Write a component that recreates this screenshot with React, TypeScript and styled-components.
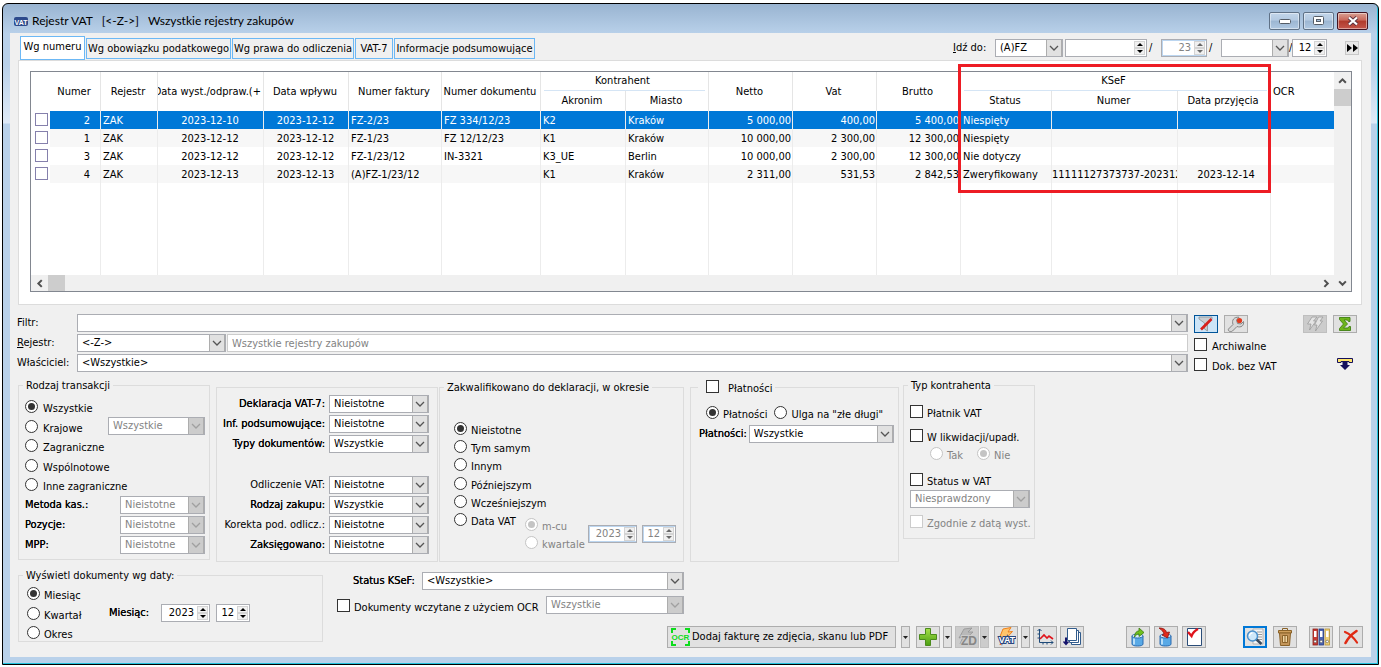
import React, { useState } from 'react';
import styled, { createGlobalStyle, css } from 'styled-components';

const Global = createGlobalStyle`
  *, *::before, *::after { box-sizing: border-box; }
  body {
    margin: 0;
    background: #fff;
    color: #000;
    font: 11px/14px "DejaVu Sans Condensed", "DejaVu Sans", sans-serif;
  }
  button, input, select { font: inherit; color: inherit; margin: 0; }
`;

/* ---------- window frame ---------- */

const Page = styled.div`
  padding: 3px 2px 2px;
`;

const Win = styled.main`
  border: 1px solid #000;
  border-radius: 6px 6px 0 0;
  padding: 0 7px 7px 7px;
  box-shadow: inset -1px -1px 0 #22c3dd;
  background: linear-gradient(#99b4d1 0, #b9d1ea 30px, #b9d1ea 60px, #dfeaf7 119px, #b9d1ea 120px);
`;

const TitleBar = styled.header`
  display: flex;
  align-items: center;
  height: 29px;
  padding: 5px 3px 0 4px;
  gap: 3px;
`;

const Title = styled.h1`
  flex: 1;
  margin: 0;
  padding-left: 1px;
  font: 12px/16px Lato, "Open Sans", sans-serif;
  white-space: pre;
`;

const CaptionButton = styled.button<{ $close?: boolean }>`
  display: flex;
  align-items: center;
  justify-content: center;
  width: 31px;
  height: 18px;
  padding: 0;
  border: 1px solid ${p => (p.$close ? '#431422' : '#5f7186')};
  border-radius: 2px;
  box-shadow: inset 0 0 0 1px rgba(255, 255, 255, 0.45);
  background: ${p =>
    p.$close
      ? 'linear-gradient(#d8a093 0, #c9675a 45%, #b03a2c 50%, #c4554a 100%)'
      : 'linear-gradient(#c2d5ea 0, #b3c9e1 45%, #9cb6d2 50%, #b0c8e2 100%)'};
`;

const Client = styled.div`
  background: #f0f0f0;
  padding: 3px 0 9px;
`;

/* ---------- form controls ---------- */

const Label = styled.label<{ $strong?: boolean; $dim?: boolean }>`
  white-space: nowrap;
  color: ${p => (p.$dim ? '#838383' : '#000')};
  ${p => p.$strong && css`text-shadow: 0 0 0 #000;`}
`;

const box = css`
  display: flex;
  min-width: 0;
  height: 18px;
  border: 1px solid #abadb3;
  background: #fff;
`;

const SelectFrame = styled.span<{ $w?: number; $dim?: boolean }>`
  ${box}
  ${p => (p.$w ? `flex: 0 0 ${p.$w}px;` : 'flex: 1;')}
  color: ${p => (p.$dim ? '#838383' : '#000')};
`;

const NativeSelect = styled.select`
  flex: 1;
  min-width: 0;
  appearance: none;
  border: 0;
  outline: 0;
  padding: 0 0 0 4px;
  background: transparent;
  opacity: 1;
  &:disabled { color: #838383; }
`;

const ArrowBox = styled.span<{ $dim?: boolean }>`
  display: flex;
  align-items: center;
  justify-content: center;
  flex: 0 0 16px;
  border: 1px solid #adadad;
  border-width: 0 1px 0 1px;
  background: ${p => (p.$dim ? '#ccc' : '#e1e1e1')};
  color: ${p => (p.$dim ? '#a0a0a0' : '#555')};
  pointer-events: none;
`;

const SpinFrame = styled.span<{ $w: number; $dim?: boolean }>`
  ${box}
  flex: 0 0 ${p => p.$w}px;
  color: ${p => (p.$dim ? '#838383' : '#000')};
  ${p => p.$dim && css`box-shadow: inset 1px 1px 0 #bcd6f0, inset 0 -1px 0 #bcd6f0;`}
`;

const SpinInput = styled.input`
  flex: 1;
  width: 0;
  min-width: 0;
  border: 0;
  outline: 0;
  padding: 0 3px 0 0;
  background: transparent;
  text-align: right;
`;

const SpinButtons = styled.span`
  display: flex;
  flex-direction: column;
  flex: 0 0 12px;
  padding: 1px 1px 1px 0;
`;

const SpinButton = styled.button`
  display: flex;
  flex: 1;
  align-items: center;
  justify-content: center;
  min-height: 0;
  padding: 0;
  border: 1px solid #d4d4d4;
  background: #f0f0f0;
`;

const TextField = styled.input`
  flex: 1;
  min-width: 0;
  height: 18px;
  border: 1px solid #ccc;
  padding: 0 4px;
  background: #fff;
  color: #838383;
`;

const Tick = styled.input.attrs({ type: 'checkbox' })`
  appearance: none;
  flex: 0 0 13px;
  width: 13px;
  height: 13px;
  border: 1px solid #333;
  background: #fff;
  &:disabled { border-color: #ccc; }
  &:checked { background: linear-gradient(#333, #333) center / 7px 7px no-repeat #fff; }
`;

const Dot = styled.input.attrs({ type: 'radio' })`
  appearance: none;
  display: flex;
  align-items: center;
  justify-content: center;
  flex: 0 0 13px;
  width: 13px;
  height: 13px;
  border: 1px solid #333;
  border-radius: 50%;
  background: #fff;
  color: #333;
  &:disabled { border-color: #c4c4c4; color: #c4c4c4; }
  &:checked::before {
    content: "";
    width: 7px;
    height: 7px;
    border-radius: 50%;
    background: currentColor;
  }
`;

const Choice = styled.label<{ $dim?: boolean }>`
  display: flex;
  align-items: flex-start;
  gap: 5px;
  height: 13px;
  line-height: 17px;
  white-space: nowrap;
  color: ${p => (p.$dim ? '#838383' : '#000')};
`;

function Select(p: { id?: string; label?: string; value: string; w?: number; disabled?: boolean }) {
  return (
    <SelectFrame $w={p.w} $dim={p.disabled}>
      <NativeSelect id={p.id} aria-label={p.label} disabled={p.disabled}>
        <option>{p.value}</option>
      </NativeSelect>
      <ArrowBox $dim={p.disabled}>
        <svg width="10" height="6" viewBox="0 0 10 6" fill="none" stroke="currentColor" strokeWidth="1.3">
          <path d="M1 1l4 4 4-4" />
        </svg>
      </ArrowBox>
    </SelectFrame>
  );
}

function Spin(p: { id?: string; label: string; value: string; w: number; disabled?: boolean }) {
  const [value, setValue] = useState(p.value);
  const ink = p.disabled ? '#6a6a6a' : '#000';
  return (
    <SpinFrame $w={p.w} $dim={p.disabled}>
      <SpinInput
        id={p.id}
        aria-label={p.label}
        value={value}
        disabled={p.disabled}
        onChange={e => setValue(e.target.value)}
      />
      <SpinButtons>
        <SpinButton aria-label={`${p.label} +`} disabled={p.disabled}>
          <svg width="6" height="3" viewBox="0 0 6 3"><path d="M0 3L3 0l3 3z" fill={ink} /></svg>
        </SpinButton>
        <SpinButton aria-label={`${p.label} -`} disabled={p.disabled}>
          <svg width="6" height="3" viewBox="0 0 6 3"><path d="M0 0l3 3 3-3z" fill={ink} /></svg>
        </SpinButton>
      </SpinButtons>
    </SpinFrame>
  );
}

function Radio(p: { name: string; text: string; checked?: boolean; disabled?: boolean }) {
  return (
    <Choice $dim={p.disabled}>
      <Dot name={p.name} defaultChecked={p.checked} disabled={p.disabled} />
      {p.text}
    </Choice>
  );
}

function Check(p: { text: string; disabled?: boolean }) {
  return (
    <Choice $dim={p.disabled}>
      <Tick disabled={p.disabled} />
      {p.text}
    </Choice>
  );
}

/* ---------- tabs and go-to bar ---------- */

const TopRow = styled.div`
  display: flex;
  justify-content: space-between;
  padding: 0 12px 0 10px;
  height: 24px;
`;

const Tabs = styled.nav`
  display: flex;
  align-items: flex-start;
  gap: 1px;
`;

const Tab = styled.button<{ $active?: boolean; $w: number }>`
  flex: 0 0 ${p => p.$w}px;
  height: ${p => (p.$active ? 24 : 21)}px;
  margin-top: ${p => (p.$active ? 0 : 2)}px;
  padding: ${p => (p.$active ? '0 0 3px' : '0')};
  border: 1px solid #6cb8f5;
  background: ${p => (p.$active ? '#fff' : '#f0f0f0')};
  white-space: nowrap;
`;

const GoTo = styled.div`
  display: flex;
  align-items: center;
  height: 24px;
  gap: 2px;
`;

const GoToLabel = styled(Label)`
  flex: 0 0 40px;
`;

const GoToPair = styled.div`
  display: flex;
  align-items: center;
  width: 106px;
`;

const Slash = styled.span<{ $w: number }>`
  flex: 0 0 ${p => p.$w}px;
`;

const FastButton = styled.button`
  display: flex;
  align-items: center;
  justify-content: center;
  width: 14px;
  height: 14px;
  margin-left: 16px;
  padding: 0;
  border: 1px solid #c8c8c8;
  background: #e8e8e8;
`;

/* ---------- data table ---------- */

const Panel = styled.section`
  margin: 0 9px 0 8px;
  padding: 10px 9px 12px 11px;
  border: 1px solid #dcdcdc;
  background: #fff;
`;

const Grid = styled.div`
  position: relative;
  display: grid;
  grid-template-columns: 1fr 17px;
  grid-template-rows: 203px 16px;
  border: 1px solid #828790;
`;

const Table = styled.table`
  width: 100%;
  table-layout: fixed;
  border-collapse: separate;
  border-spacing: 0;
  line-height: 16px;
`;

const Th = styled.th<{ $bare?: boolean; $sub?: boolean }>`
  height: ${p => (p.$sub ? 20 : 19)}px;
  padding: 0 2px 0 0;
  font-weight: normal;
  white-space: nowrap;
  overflow: hidden;
  ${p => !p.$bare && css`border-right: 1px solid #e5e5e5;`}
`;

const HeadClip = styled.div`
  display: flex;
  justify-content: flex-end;
  overflow: hidden;
`;

const Band = styled.div`
  height: 19px;
  margin: 0 1px 0 3px;
  padding-right: 4px;
  border-bottom: 1px solid #d5e5f5;
  line-height: 18px;
`;

const LeadTh = styled(Th)`
  padding-left: 2px;
  text-align: left;
`;

const Row = styled.tr<{ $selected?: boolean; $stripe?: boolean }>`
  td {
    color: ${p => (p.$selected ? '#fff' : '#000')};
    background: ${p => (p.$selected ? '#0078d7' : p.$stripe ? '#f7f7f7' : '#fff')};
  }
  td:first-child { background: #fff; }
`;

const Td = styled.td<{ $align?: string; $bare?: boolean; $inset?: number; $lead?: number }>`
  height: 18px;
  padding: 2px ${p => p.$inset ?? 1}px 0 ${p => p.$lead ?? (p.$align ? 0 : 2)}px;
  overflow: hidden;
  white-space: nowrap;
  text-align: ${p => p.$align ?? 'left'};
  ${p => !p.$bare && css`border-right: 1px solid #ececec;`}
`;

const TickCell = styled.td`
  height: 18px;
  padding: 2px 0 3px 4px;
  vertical-align: top;
`;

const Filler = styled(Td)`
  height: 91px;
`;

const RowTick = styled(Tick)`
  display: block;
  border-color: #8580ac;
`;

const VScroll = styled.div`
  grid-row: 1 / 3;
  grid-column: 2;
  display: flex;
  flex-direction: column;
  align-items: center;
  background: #f0f0f0;
`;

const HScroll = styled.div`
  display: flex;
  align-items: center;
  background: #f0f0f0;
`;

const Thumb = styled.span`
  flex: 0 0 17px;
  align-self: stretch;
  background: #cdcdcd;
`;

const Track = styled.span`
  flex: 1;
`;

const ScrollButton = styled.button`
  display: flex;
  align-items: center;
  justify-content: center;
  flex: 0 0 17px;
  width: 17px;
  height: 17px;
  padding: 0;
  border: 0;
  background: transparent;
  color: #505050;
`;

const Highlight = styled.div`
  position: absolute;
  left: 927px;
  top: -8px;
  width: 313px;
  height: 129px;
  border: 3px solid #ed1c24;
  pointer-events: none;
`;

const chevrons = {
  up: 'M1 6l3-3 3 3',
  down: 'M1 3l3 3 3-3',
  left: 'M6 1L3 4l3 3',
  right: 'M3 1l3 3-3 3',
};

function Scroll({ dir, label }: { dir: keyof typeof chevrons; label: string }) {
  return (
    <ScrollButton aria-label={label}>
      <svg width="9" height="9" viewBox="0 0 8 8" fill="none" stroke="currentColor" strokeWidth="1.8">
        <path d={chevrons[dir]} />
      </svg>
    </ScrollButton>
  );
}

const widths = [19, 51, 57, 106, 85, 93, 99, 85, 83, 84, 84, 84, 91, 126, 93];
const rows = [
  ['2', 'ZAK', '2023-12-10', '2023-12-12', 'FZ-2/23', 'FZ 334/12/23', 'K2', 'Kraków', '5 000,00', '400,00', '5 400,00', 'Niespięty', '', '', ''],
  ['1', 'ZAK', '2023-12-12', '2023-12-12', 'FZ-1/23', 'FZ 12/12/23', 'K1', 'Kraków', '10 000,00', '2 300,00', '12 300,00', 'Niespięty', '', '', ''],
  ['3', 'ZAK', '2023-12-12', '2023-12-12', 'FZ-1/23/12', 'IN-3321', 'K3_UE', 'Berlin', '10 000,00', '2 300,00', '12 300,00', 'Nie dotyczy', '', '', ''],
  ['4', 'ZAK', '2023-12-13', '2023-12-13', '(A)FZ-1/23/12', '', 'K1', 'Kraków', '2 311,00', '531,53', '2 842,53', 'Zweryfikowany', '11111127373737-202312', '2023-12-14', ''],
];
const aligns: Record<number, string> = { 0: 'right', 2: 'center', 3: 'center', 8: 'right', 9: 'right', 10: 'right', 13: 'center' };
const insets: Record<number, number> = { 0: 10, 12: 0 };
const leads: Record<number, number> = { 12: 0, 13: 5 };

function Register() {
  return (
    <Grid>
      <Table>
        <colgroup>
          {widths.map((w, i) => <col key={i} style={{ width: w }} />)}
          <col />
        </colgroup>
        <thead>
          <tr>
            <Th rowSpan={2} $bare />
            <Th rowSpan={2}>Numer</Th>
            <Th rowSpan={2}>Rejestr</Th>
            <Th rowSpan={2}><HeadClip>Data wyst./odpraw.(+</HeadClip></Th>
            <Th rowSpan={2}>Data wpływu</Th>
            <Th rowSpan={2}>Numer faktury</Th>
            <Th rowSpan={2}>Numer dokumentu</Th>
            <Th colSpan={2}><Band>Kontrahent</Band></Th>
            <Th rowSpan={2}>Netto</Th>
            <Th rowSpan={2}>Vat</Th>
            <Th rowSpan={2}>Brutto</Th>
            <Th colSpan={3}><Band>KSeF</Band></Th>
            <LeadTh rowSpan={2} $bare>OCR</LeadTh>
          </tr>
          <tr>
            <Th $sub>Akronim</Th>
            <Th $sub>Miasto</Th>
            <Th $sub>Status</Th>
            <Th $sub>Numer</Th>
            <Th $sub>Data przyjęcia</Th>
          </tr>
        </thead>
        <tbody>
          {rows.map((r, i) => (
            <Row key={r[0]} $selected={i === 0} $stripe={i % 2 === 1}>
              <TickCell><RowTick aria-label={`Zaznacz ${r[0]}`} /></TickCell>
              {r.map((c, j) => (
                <Td key={j} $align={aligns[j]} $inset={insets[j]} $lead={leads[j]} $bare={j === 14}>{c}</Td>
              ))}
            </Row>
          ))}
          <tr>
            {[...widths, 0].map((_, i) => <Filler key={i} $bare={i === 0 || i === 15} />)}
          </tr>
        </tbody>
      </Table>
      <VScroll>
        <Scroll dir="up" label="W górę" />
        <Thumb />
        <Track />
        <Scroll dir="down" label="W dół" />
      </VScroll>
      <HScroll>
        <Scroll dir="left" label="W lewo" />
        <Thumb />
        <Track />
        <Scroll dir="right" label="W prawo" />
      </HScroll>
      <Highlight />
    </Grid>
  );
}

/* ---------- filter strip ---------- */

const Filters = styled.section`
  display: grid;
  grid-template-columns: minmax(0, 1fr) 163px;
  column-gap: 6px;
  padding: 9px 14px 0 7px;
`;

const FilterRow = styled.div`
  display: flex;
  gap: 1px;
  height: 20px;
`;

const FilterLabel = styled(Label)`
  flex: 0 0 59px;
  line-height: 17px;
`;

const SideRow = styled.div`
  display: flex;
  align-items: center;
  height: 20px;
  gap: 6px;
`;

const Spacer = styled.span`
  flex: 1;
`;

const IconButton = styled.button<{ $tone?: 'on' | 'off' | 'focus'; $h?: number }>`
  display: flex;
  align-items: center;
  justify-content: center;
  flex: 0 0 24px;
  height: ${p => p.$h ?? 22}px;
  padding: 0;
  border: ${p => (p.$tone === 'focus' ? '2px solid #0078d7' : p.$tone === 'on' ? '1px solid #005499' : '1px solid #adadad')};
  ${p => p.$tone === 'off' && css`border-color: #bfbfbf;`}
  background: ${p => (p.$tone === 'on' ? '#cce4f7' : p.$tone === 'off' ? '#ccc' : '#e1e1e1')};
`;

const PlainButton = styled.button`
  display: flex;
  padding: 0;
  margin-right: 4px;
  border: 0;
  background: transparent;
`;

/* ---------- groups ---------- */

const Groups = styled.section`
  display: flex;
  align-items: flex-start;
  padding: 4px 8px 0;
`;

const Group = styled.fieldset<{ $w: number; $left?: number; $top?: number; $min?: number }>`
  flex: 0 0 ${p => p.$w}px;
  min-width: 0;
  min-height: ${p => p.$min ?? 0}px;
  margin: ${p => p.$top ?? 0}px 0 0 ${p => p.$left ?? 0}px;
  padding: 0 4px;
  border: 1px solid #dcdcdc;
`;

const Legend = styled.legend`
  height: 14px;
  padding: 0 3px;
  line-height: 16px;
  white-space: nowrap;
`;

const CheckLegend = styled(Legend)`
  margin-left: 3px;
  padding-left: 8px;
  label { gap: 9px; }
`;

const Stack = styled.div<{ $h: number }>`
  display: flex;
  flex-direction: column;
  justify-content: space-between;
  height: ${p => p.$h}px;
`;

const Line = styled.div<{ $gap?: number }>`
  display: flex;
  align-items: center;
  gap: ${p => p.$gap ?? 0}px;
`;

const ShortLine = styled(Line)`
  justify-content: space-between;
  height: 13px;
`;

const FieldLine = styled.div<{ $right?: boolean }>`
  display: flex;
  height: 20px;
  gap: 4px;
  label {
    flex: 1;
    line-height: 17px;
    text-align: ${p => (p.$right ? 'right' : 'left')};
  }
`;

const KindBody = styled.div`
  padding: 8px 0 3px 2px;
`;

const KindFields = styled.div`
  padding-top: 5px;
`;

const DeclBody = styled.div`
  padding: 7px 4px 5px 0;
`;

const DeclGap = styled.div`
  height: 21px;
`;

const PeriodBody = styled.div`
  display: flex;
  align-items: flex-end;
  padding: 28px 0 12px 10px;
`;

const PeriodList = styled(Stack)`
  width: 71px;
  margin-bottom: 23px;
  label { gap: 4px; }
`;

const PeriodSub = styled(Line)`
  height: 31px;
`;

const SubList = styled(Stack)`
  width: 58px;
  label { gap: 4px; }
`;

const PayBody = styled.div`
  display: flex;
  flex-direction: column;
  gap: 6px;
  padding-top: 12px;
`;

const PayRadios = styled(Line)`
  padding-left: 11px;
  label { gap: 4px; }
`;

const PayField = styled(Line)`
  padding-left: 4px;
`;

const PartyBody = styled.div`
  display: grid;
  grid-template-columns: 120px;
  grid-template-rows: 24px 18px 26px 17px 25px 13px;
  padding: 13px 0 10px 2px;
  label { gap: 4px; }
`;

const PartyRadios = styled(Line)`
  height: 13px;
  padding-left: 20px;
`;

/* ---------- bottom area ---------- */

const Bottom = styled.section`
  display: flex;
  align-items: flex-start;
  padding: 6px 8px 0;
`;

const DateBody = styled.div`
  display: flex;
  align-items: center;
  padding: 5px 0 2px 4px;
`;

const DateList = styled(Stack)`
  width: 82px;
  label { gap: 4px; }
`;

const MonthLabel = styled(Label)`
  flex: 0 0 46px;
`;

const BottomMain = styled.div`
  flex: 1;
  min-width: 0;
  padding: 4px 0 0 14px;
`;

const StatusLine = styled(Line)`
  padding-left: 16px;
  label { flex: 0 0 69px; }
`;

const OcrLine = styled(Line)`
  height: 18px;
  margin-top: 6px;
`;

const OcrChoice = styled.div`
  flex: 0 0 209px;
  label { gap: 4px; }
`;

const Toolbar = styled.div`
  display: flex;
  justify-content: flex-end;
  gap: 3px;
  margin-top: 12px;
`;

const ToolGroup = styled.div<{ $left?: number; $gap?: number }>`
  display: flex;
  gap: ${p => p.$gap ?? 3}px;
  margin-left: ${p => p.$left ?? 0}px;
`;

const ScanButton = styled.button`
  display: flex;
  align-items: center;
  flex: 0 0 229px;
  height: 22px;
  gap: 2px;
  padding: 0 0 0 3px;
  border: 1px solid #adadad;
  background: #e1e1e1;
  white-space: nowrap;
`;

const DropButton = styled.button`
  display: flex;
  align-items: center;
  justify-content: center;
  flex: 0 0 9px;
  height: 22px;
  padding: 0;
  border: 1px solid #adadad;
  background: #e1e1e1;
  &:disabled { background: #ccc; border-color: #bfbfbf; }
`;

function Drop({ label, disabled }: { label: string; disabled?: boolean }) {
  return (
    <DropButton aria-label={label} disabled={disabled}>
      <svg width="5" height="3" viewBox="0 0 5 3"><path d="M0 0h5L2.5 3z" fill="#222" /></svg>
    </DropButton>
  );
}

/* ---------- drawings ---------- */

const FilterIcon = () => (
  <svg width="16" height="16" viewBox="0 0 16 16">
    <path d="M1 1h13v2L9.500 7v8l-3-2V7L1 3z" fill="#c9ced2" stroke="#8b9094" strokeWidth=".8" />
    <path d="M13.500 3L3 13.500" stroke="#d8201c" strokeWidth="2.600" />
  </svg>
);
const WrenchIcon = () => (
  <svg width="18" height="16" viewBox="0 0 18 16">
    <path d="M1.500 13L6 8.500C4.500 4 7 .8 12 1.200L9.500 4l1 3.500 3.500.5 2.500-2.500c.8 4-2.500 6.500-6.500 5L5.500 15c-2 1.500-5 0-4-2z" fill="#d8d8d8" stroke="#858585" />
    <circle cx="12.500" cy="4.500" r="2.600" fill="#e03a1e" />
  </svg>
);
const BoltsIcon = () => (
  <svg width="18" height="16" viewBox="0 0 18 16" fill="#e4e4e4" stroke="#9c9c9c" strokeWidth=".8">
    <path d="M6 1h5L7.500 5H10L3.500 14l1.500-6H1.500z" />
    <path d="M12.500 1H17l-3 4h2.500L9.500 15l1.500-6H8.500z" />
  </svg>
);
const SigmaIcon = () => (
  <svg width="14" height="16" viewBox="0 0 14 16">
    <path d="M1.500 1.500h10.500v4h-1.500L9.500 4H6l3.500 4L5.500 12h4.500l1-1.500h1.500v4h-11v-2L5.500 8l-4-4.500z" fill="#6fb51c" stroke="#3f8012" strokeWidth=".9" />
  </svg>
);
const CollapseIcon = () => (
  <svg width="16" height="12" viewBox="0 0 16 12">
    <path d="M.5.5h15v4H12v-1H4v1H.5z" fill="#ffe66b" stroke="#15105c" />
    <path d="M5.500 4h5v3H13l-5 5-5-5h2.500z" fill="#15105c" />
  </svg>
);
const VatLogo = () => (
  <svg width="14" height="11" viewBox="0 0 14 11">
    <rect x="0" y="1" width="14" height="9" rx="2" fill="#2d4a8c" />
    <text x="7" y="8.500" textAnchor="middle" fontSize="7" fontWeight="bold" fontFamily="Liberation Sans, sans-serif" fill="#fff">VAT</text>
  </svg>
);
const OcrIcon = () => (
  <svg width="19" height="18" viewBox="0 0 19 18">
    <path d="M1 5V1h4M14 1h4v4M1 13v4h4M14 17h4v-4" fill="none" stroke="#0ddc1c" strokeWidth="2" />
    <text x="9.500" y="12" textAnchor="middle" fontSize="8" fontWeight="bold" fontFamily="Liberation Sans, sans-serif" fill="#0ddc1c">OCR</text>
  </svg>
);
const PlusIcon = () => (
  <svg width="18" height="18" viewBox="0 0 18 18">
    <defs>
      <linearGradient id="leaf" x1="0" y1="0" x2="0" y2="1">
        <stop offset="0" stopColor="#a5e04a" />
        <stop offset="1" stopColor="#4a9e12" />
      </linearGradient>
    </defs>
    <path d="M6.500.5h5v6h6v5h-6v6h-5v-6h-6v-5h6z" fill="url(#leaf)" stroke="#4b8b1c" />
  </svg>
);
const ZdIcon = () => (
  <svg width="20" height="20" viewBox="0 0 20 20">
    <path d="M7 2l8-1-4 4 5 0L3 17l3-7-4 1z" fill="#b9b9b9" stroke="#949494" strokeWidth=".8" />
    <text x="12" y="18" textAnchor="middle" fontSize="12" fontWeight="bold" fontFamily="Liberation Sans, sans-serif" fill="#868686" stroke="#ccc" strokeWidth="2" paintOrder="stroke">ZD</text>
  </svg>
);
const VatBoltIcon = () => (
  <svg width="20" height="20" viewBox="0 0 20 20">
    <path d="M7 2l8-1.500-3 4.500 4.500-.5L4 18l2.500-7L3 12z" fill="#ffc46b" stroke="#f0801a" />
    <text x="11" y="16" textAnchor="middle" fontSize="9" fontWeight="bold" fontFamily="Liberation Sans, sans-serif" fill="#fff" stroke="#27467f" strokeWidth="2" paintOrder="stroke">VAT</text>
  </svg>
);
const ChartIcon = () => (
  <svg width="18" height="18" viewBox="0 0 18 18" fill="none">
    <path d="M3.500 1v13.500H17M1.500 3l2-2 2 2M15 12.500l2 2-2 2M1.500 6h2M1.500 10h2M7 14.500v2M11 14.500v2" stroke="#1e4a78" />
    <path d="M4 11l4-4 3 3 2-2 4 3" stroke="#e0141c" strokeWidth="1.600" />
  </svg>
);
const PagesIcon = () => (
  <svg width="18" height="18" viewBox="0 0 18 18" stroke="#315b8c" fill="#fff">
    <path d="M8.500 4.500h9v12h-9z" />
    <path d="M6.500 2.500h9v12h-9z" />
    <path d="M4.500.5h9v12h-9z" />
    <path d="M2 9.500h2v4h2.500L3 17.500-.500 13.500H2z" fill="#14136b" stroke="none" />
  </svg>
);
const Cylinder = ({ children }: { children: React.ReactNode }) => (
  <svg width="18" height="20" viewBox="0 0 18 20">
    <path d="M3 9v8c0 1.500 2.500 2 5.500 2s5.500-.5 5.500-2V9z" fill="#58a9e6" stroke="#2a6bb0" />
    <path d="M5 11.500v6" stroke="#b9def8" strokeWidth="2" />
    <ellipse cx="8.500" cy="9" rx="5.500" ry="2" fill="#d8edfb" stroke="#2a6bb0" />
    {children}
  </svg>
);
const CheckPageIcon = () => (
  <svg width="20" height="20" viewBox="0 0 20 20">
    <path d="M3.500 1.500h14v17h-14z" fill="#fff" stroke="#2b4d78" />
    <path d="M4 5l3.500 4C9 5 11 3.500 14 2" fill="none" stroke="#e0141c" strokeWidth="2.400" />
  </svg>
);
const PreviewIcon = () => (
  <svg width="20" height="18" viewBox="0 0 20 18">
    <path d="M8 1h10v15H8z" fill="#f6f6f6" stroke="#b5b5b5" />
    <path d="M12 4h5M13 6.500h4M13 9h4M12 11.500h5" stroke="#999" />
    <path d="M11 11l5.500 5" stroke="#3b4a5c" strokeWidth="2.600" />
    <circle cx="7.500" cy="8" r="5" fill="#cfe8fa" stroke="#4a90cc" strokeWidth="1.500" />
    <path d="M4.500 8a3 3 0 0 1 3-3" stroke="#fff" strokeWidth="1.400" fill="none" />
  </svg>
);
const TrashIcon = () => (
  <svg width="16" height="18" viewBox="0 0 16 18" stroke="#8a6228">
    <path d="M5.500 2.500v-2h5v2" fill="none" />
    <path d="M1.500 2.500h13v2.500h-13z" fill="#d0a05c" />
    <path d="M2.500 5h11l-1 12.500h-9z" fill="#c4965a" />
    <path d="M5.500 7.500h5v7h-5zM8 7.500v7" fill="#f0d6a5" />
  </svg>
);
const BindersIcon = () => (
  <svg width="18" height="18" viewBox="0 0 18 18">
    {[['#c93a32', '#8a201c'], ['#4b65b5', '#273a80'], ['#f0d27a', '#b59138']].map(([fill, line], i) => (
      <g key={fill} transform={`translate(${i * 6} 0)`}>
        <rect x="1" y="1" width="4.500" height="16" fill={fill} stroke={line} strokeWidth=".8" />
        <rect x="2" y="3" width="2.500" height="6" fill="#fff" />
        <circle cx="3.200" cy="13.500" r="1.300" fill="#fff" stroke="#555" strokeWidth=".6" />
      </g>
    ))}
  </svg>
);
const CrossIcon = () => (
  <svg width="16" height="16" viewBox="0 0 16 16" fill="none" stroke="#e02a14" strokeLinecap="round">
    <path d="M2 3c5 2 9 6 12 10.500" strokeWidth="2.200" />
    <path d="M13.500 2C9 5 5 9 2.500 14" strokeWidth="2.600" />
  </svg>
);

/* ---------- screen ---------- */

const declTop: [string, string, boolean][] = [
  ['Deklaracja VAT-7:', 'Nieistotne', true],
  ['Inf. podsumowujące:', 'Nieistotne', true],
  ['Typy dokumentów:', 'Wszystkie', true],
];
const declBottom: [string, string, boolean][] = [
  ['Odliczenie VAT:', 'Nieistotne', false],
  ['Rodzaj zakupu:', 'Wszystkie', true],
  ['Korekta pod. odlicz.:', 'Nieistotne', false],
  ['Zaksięgowano:', 'Nieistotne', true],
];

function DeclField({ row }: { row: [string, string, boolean] }) {
  const [text, value, strong] = row;
  return (
    <FieldLine $right>
      <Label htmlFor={text} $strong={strong}>{text}</Label>
      <Select id={text} value={value} w={100} />
    </FieldLine>
  );
}

export default function App() {
  return (
    <Page>
      <Global />
      <Win>
        <TitleBar>
          <VatLogo />
          <Title>{'Rejestr VAT   [<-Z->]   Wszystkie rejestry zakupów'}</Title>
          <CaptionButton aria-label="Minimalizuj">
            <svg width="12" height="6" viewBox="0 0 12 6"><rect x=".5" y="1.500" width="11" height="4" rx="1" fill="#fff" stroke="#555c66" /></svg>
          </CaptionButton>
          <CaptionButton aria-label="Maksymalizuj">
            <svg width="12" height="10" viewBox="0 0 12 10"><rect x=".5" y=".5" width="10" height="8" rx="1" fill="#fff" stroke="#555c66" /><rect x="3.500" y="3.500" width="4" height="2" fill="#a8c0dc" stroke="#555c66" /></svg>
          </CaptionButton>
          <CaptionButton aria-label="Zamknij" $close>
            <svg width="12" height="10" viewBox="0 0 12 10"><path d="M2 1.500l8 7M10 1.500l-8 7" stroke="#5b3340" strokeWidth="4" /><path d="M2 1.500l8 7M10 1.500l-8 7" stroke="#fff" strokeWidth="2.200" /></svg>
          </CaptionButton>
        </TitleBar>

        <Client>
          <TopRow>
            <Tabs>
              <Tab $active $w={65}>Wg numeru</Tab>
              <Tab $w={145}>Wg obowiązku podatkowego</Tab>
              <Tab $w={122}>Wg prawa do odliczenia</Tab>
              <Tab $w={38}>VAT-7</Tab>
              <Tab $w={141}>Informacje podsumowujące</Tab>
            </Tabs>
            <GoTo>
              <GoToLabel htmlFor="goto"><u>I</u>dź do:</GoToLabel>
              <Select id="goto" value="(A)FZ" w={68} />
              <Spin label="Numer" value="" w={82} />
              <Slash $w={10}>/</Slash>
              <Spin label="Rok" value="23" w={46} disabled />
              <Slash $w={10}>/</Slash>
              <GoToPair>
                <Select label="Seria" value="" w={68} />
                <Slash $w={3}>/</Slash>
                <Spin label="Miesiąc rejestru" value="12" w={35} />
              </GoToPair>
              <FastButton aria-label="Przejdź">
                <svg width="11" height="8" viewBox="0 0 11 8"><path d="M0 0l5 4-5 4zM6 0l5 4-5 4z" /></svg>
              </FastButton>
            </GoTo>
          </TopRow>

          <Panel>
            <Register />
          </Panel>

          <Filters>
            <div>
              <FilterRow>
                <FilterLabel htmlFor="filtr">Filtr:</FilterLabel>
                <Select id="filtr" value="" />
              </FilterRow>
              <FilterRow>
                <FilterLabel htmlFor="rejestr"><u>R</u>ejestr:</FilterLabel>
                <Select id="rejestr" value="<-Z->" w={149} />
                <TextField aria-label="Nazwa rejestru" defaultValue="Wszystkie rejestry zakupów" readOnly />
              </FilterRow>
              <FilterRow>
                <FilterLabel htmlFor="wlasciciel">Właściciel:</FilterLabel>
                <Select id="wlasciciel" value="<Wszystkie>" />
              </FilterRow>
            </div>
            <div>
              <SideRow>
                <IconButton $tone="on" $h={18} aria-label="Filtr"><FilterIcon /></IconButton>
                <IconButton $h={18} aria-label="Konstruktor filtra"><WrenchIcon /></IconButton>
                <Spacer />
                <IconButton $tone="off" $h={18} disabled aria-label="Operacje"><BoltsIcon /></IconButton>
                <IconButton $h={18} aria-label="Suma"><SigmaIcon /></IconButton>
              </SideRow>
              <SideRow><Check text="Archiwalne" /></SideRow>
              <SideRow>
                <Check text="Dok. bez VAT" />
                <Spacer />
                <PlainButton aria-label="Zwiń"><CollapseIcon /></PlainButton>
              </SideRow>
            </div>
          </Filters>

          <Groups>
            <Group $w={192}>
              <Legend>Rodzaj transakcji</Legend>
              <KindBody>
                <Stack $h={91}>
                  <Radio name="kind" text="Wszystkie" checked />
                  <ShortLine>
                    <Radio name="kind" text="Krajowe" />
                    <Select label="Krajowe" value="Wszystkie" w={97} disabled />
                  </ShortLine>
                  <Radio name="kind" text="Zagraniczne" />
                  <Radio name="kind" text="Wspólnotowe" />
                  <Radio name="kind" text="Inne zagraniczne" />
                </Stack>
                <KindFields>
                  {['Metoda kas.:', 'Pozycje:', 'MPP:'].map(t => (
                    <FieldLine key={t}>
                      <Label htmlFor={t} $strong>{t}</Label>
                      <Select id={t} value="Nieistotne" w={85} disabled />
                    </FieldLine>
                  ))}
                </KindFields>
              </KindBody>
            </Group>

            <Group $w={222} $left={6} $top={9}>
              <DeclBody>
                {declTop.map(r => <DeclField key={r[0]} row={r} />)}
                <DeclGap />
                {declBottom.map(r => <DeclField key={r[0]} row={r} />)}
              </DeclBody>
            </Group>

            <Group $w={245} $left={1} $top={2}>
              <Legend>Zakwalifikowano do deklaracji, w okresie</Legend>
              <PeriodBody>
                <PeriodList $h={104}>
                  <Radio name="period" text="Nieistotne" checked />
                  <Radio name="period" text="Tym samym" />
                  <Radio name="period" text="Innym" />
                  <Radio name="period" text="Późniejszym" />
                  <Radio name="period" text="Wcześniejszym" />
                  <Radio name="period" text="Data VAT" />
                </PeriodList>
                <PeriodSub $gap={5}>
                  <SubList $h={31}>
                    <Radio name="unit" text="m-cu" checked disabled />
                    <Radio name="unit" text="kwartale" disabled />
                  </SubList>
                  <Spin label="Rok deklaracji" value="2023" w={49} disabled />
                  <Spin label="Miesiąc deklaracji" value="12" w={34} disabled />
                </PeriodSub>
              </PeriodBody>
            </Group>

            <Group $w={209} $left={6} $top={2} $min={182}>
              <CheckLegend><Check text="Płatności" /></CheckLegend>
              <PayBody>
                <PayRadios $gap={7}>
                  <Radio name="pay" text="Płatności" checked />
                  <Radio name="pay" text={'Ulga na "złe długi"'} />
                </PayRadios>
                <PayField $gap={2}>
                  <Label htmlFor="pay" $strong>Płatności:</Label>
                  <Select id="pay" value="Wszystkie" w={145} />
                </PayField>
              </PayBody>
            </Group>

            <Group $w={132} $left={4}>
              <Legend>Typ kontrahenta</Legend>
              <PartyBody>
                <Check text="Płatnik VAT" />
                <Check text="W likwidacji/upadł." />
                <PartyRadios $gap={14}>
                  <Radio name="liq" text="Tak" disabled />
                  <Radio name="liq" text="Nie" checked disabled />
                </PartyRadios>
                <Check text="Status w VAT" />
                <Select label="Status w VAT" value="Niesprawdzony" disabled />
                <Check text="Zgodnie z datą wyst." disabled />
              </PartyBody>
            </Group>
          </Groups>

          <Bottom>
            <Group $w={305}>
              <Legend>Wyświetl dokumenty wg daty:</Legend>
              <DateBody>
                <DateList $h={52}>
                  <Radio name="date" text="Miesiąc" checked />
                  <Radio name="date" text="Kwartał" />
                  <Radio name="date" text="Okres" />
                </DateList>
                <Line $gap={6}>
                  <MonthLabel htmlFor="rok" $strong>Miesiąc:</MonthLabel>
                  <Spin id="rok" label="Rok dokumentów" value="2023" w={49} />
                  <Spin label="Miesiąc dokumentów" value="12" w={34} />
                </Line>
              </DateBody>
            </Group>

            <BottomMain>
              <StatusLine>
                <Label htmlFor="ksef" $strong>Status KSeF:</Label>
                <Select id="ksef" value="<Wszystkie>" w={262} />
              </StatusLine>
              <OcrLine>
                <OcrChoice><Check text="Dokumenty wczytane z użyciem OCR" /></OcrChoice>
                <Select label="OCR" value="Wszystkie" w={138} disabled />
              </OcrLine>
              <Toolbar>
                <ToolGroup $gap={5}>
                  <ScanButton><OcrIcon />Dodaj fakturę ze zdjęcia, skanu lub PDF</ScanButton>
                  <Drop label="Więcej: OCR" />
                </ToolGroup>
                <ToolGroup $left={3}>
                  <IconButton aria-label="Dodaj"><PlusIcon /></IconButton>
                  <Drop label="Więcej: dodaj" />
                </ToolGroup>
                <ToolGroup $gap={1}>
                  <IconButton $tone="off" disabled aria-label="ZD"><ZdIcon /></IconButton>
                  <Drop label="Więcej: ZD" disabled />
                </ToolGroup>
                <ToolGroup $left={2}>
                  <IconButton aria-label="VAT"><VatBoltIcon /></IconButton>
                  <Drop label="Więcej: VAT" />
                  <IconButton aria-label="Wykres"><ChartIcon /></IconButton>
                  <IconButton aria-label="Dokumenty"><PagesIcon /></IconButton>
                </ToolGroup>
                <ToolGroup $left={39} $gap={4}>
                  <IconButton aria-label="Eksport">
                    <Cylinder><path d="M5.500 10C6 5 8 4 10 4V1l5 4.500-5 4V7C8 7 7 8 5.500 10z" fill="#6fc01e" stroke="#3a7a12" strokeWidth=".8" /></Cylinder>
                  </IconButton>
                  <IconButton aria-label="Import">
                    <Cylinder><path d="M2 1c5 0 7 2 7.500 4.500l3-.5-2 6-5.500-3 2-1C6.500 5 5 3 2 1z" fill="#e02a1c" stroke="#8c1410" strokeWidth=".8" /></Cylinder>
                  </IconButton>
                  <IconButton aria-label="Zatwierdź"><CheckPageIcon /></IconButton>
                </ToolGroup>
                <ToolGroup $left={34} $gap={6}>
                  <IconButton $tone="focus" aria-label="Podgląd"><PreviewIcon /></IconButton>
                  <IconButton aria-label="Usuń"><TrashIcon /></IconButton>
                </ToolGroup>
                <ToolGroup $left={9} $gap={6}>
                  <IconButton aria-label="Rejestry"><BindersIcon /></IconButton>
                  <IconButton aria-label="Zamknij okno"><CrossIcon /></IconButton>
                </ToolGroup>
              </Toolbar>
            </BottomMain>
          </Bottom>
        </Client>
      </Win>
    </Page>
  );
}
